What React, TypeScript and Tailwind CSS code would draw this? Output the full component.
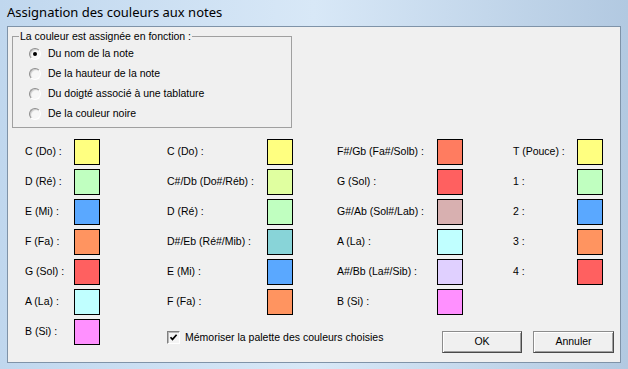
const col1 = [
  { label: "C (Do) :", color: "#ffff80" },
  { label: "D (Ré) :", color: "#c0ffc0" },
  { label: "E (Mi) :", color: "#5aa8ff" },
  { label: "F (Fa) :", color: "#ff9460" },
  { label: "G (Sol) :", color: "#ff6060" },
  { label: "A (La) :", color: "#c0ffff" },
  { label: "B (Si) :", color: "#ff90ff" },
];

const col2 = [
  { label: "C (Do) :", color: "#ffff80" },
  { label: "C#/Db (Do#/Réb) :", color: "#e0ffa0" },
  { label: "D (Ré) :", color: "#c0ffc0" },
  { label: "D#/Eb (Ré#/Mib) :", color: "#88d4d8" },
  { label: "E (Mi) :", color: "#5aa8ff" },
  { label: "F (Fa) :", color: "#ff9460" },
];

const col3 = [
  { label: "F#/Gb (Fa#/Solb) :", color: "#ff7c60" },
  { label: "G (Sol) :", color: "#ff6060" },
  { label: "G#/Ab (Sol#/Lab) :", color: "#d8b0b0" },
  { label: "A (La) :", color: "#c0ffff" },
  { label: "A#/Bb (La#/Sib) :", color: "#e0d0ff" },
  { label: "B (Si) :", color: "#ff90ff" },
];

const col4 = [
  { label: "T (Pouce) :", color: "#ffff80" },
  { label: "1 :", color: "#c0ffc0" },
  { label: "2 :", color: "#5aa8ff" },
  { label: "3 :", color: "#ff9460" },
  { label: "4 :", color: "#ff6060" },
];

const options = [
  "Du nom de la note",
  "De la hauteur de la note",
  "Du doigté associé à une tablature",
  "De la couleur noire",
];

type Note = { label: string; color: string };

function Column({ items, width, labelWidth }: { items: Note[]; width: string; labelWidth: string }) {
  return (
    <div className={`flex flex-col gap-[4px] ${width}`}>
      {items.map((it, i) => (
        <div key={i} className="flex items-center h-[26px]">
          <span className={`${labelWidth} shrink-0 whitespace-nowrap`}>{it.label}</span>
          <div
            className="w-[26px] h-[26px] border border-black"
            style={{ backgroundColor: it.color }}
          />
        </div>
      ))}
    </div>
  );
}

function Radio({ checked }: { checked?: boolean }) {
  return (
    <div className="w-[12px] h-[12px] rounded-full border border-t-[#8d8d8d] border-l-[#8d8d8d] border-b-white border-r-white bg-[#f7f7f7] shadow-[inset_1px_1px_1px_#c8c8c8] flex items-center justify-center">
      {checked && <div className="w-[4px] h-[4px] rounded-full bg-black" />}
    </div>
  );
}

function WinButton({ children, width }: { children: string; width: string }) {
  return (
    <button
      className={`${width} h-[22px] bg-[#f0f0f0] border border-[#8c8c8c] border-b-[#4a4a4a] border-r-[#4a4a4a] shadow-[inset_1px_1px_0_#ffffff,inset_-1px_-1px_0_#a0a0a0] flex items-center justify-center`}
    >
      {children}
    </button>
  );
}

export default function App() {
  return (
    <div className="w-[628px] h-[369px] flex flex-col overflow-hidden bg-gradient-to-r from-[#c0d7ee] via-[#d8e8f7] to-[#b2c9e1] font-['Liberation_Sans',Arial,sans-serif] text-[10.5px] text-black">
      {/* barre de titre */}
      <div className="h-[26px] shrink-0 flex items-center pl-[7px] font-['Noto_Sans',sans-serif] text-[13px] text-black">
        Assignation des couleurs aux notes
      </div>

      {/* zone client */}
      <div className="flex-1 mx-[7px] mb-[6px] border border-[#7f93a8] bg-[#f0f0f0] flex flex-col">
        <fieldset className="ml-[4px] mt-[3px] w-[280px] border border-[#a0a0a0] pb-[3px]">
          <legend className="ml-[6px] px-[1px] leading-[13px]">La couleur est assignée en fonction :</legend>
          <div className="pl-[16px] pt-[1px]">
            {options.map((o, i) => (
              <div key={i} className="h-[20px] flex items-center gap-[7px]">
                <Radio checked={i === 0} />
                <span>{o}</span>
              </div>
            ))}
          </div>
        </fieldset>

        <div className="flex mt-[11px] pl-[17px]">
          <Column items={col1} width="w-[142px]" labelWidth="w-[49px]" />

          <div className="flex-1 flex flex-col pr-[6px]">
            <div className="flex">
              <Column items={col2} width="w-[170px]" labelWidth="w-[100px]" />
              <Column items={col3} width="w-[176px]" labelWidth="w-[100px]" />
              <Column items={col4} width="w-[100px]" labelWidth="w-[64px]" />
            </div>

            <div className="flex items-start mt-[16px]">
              <div className="flex items-center gap-[5px] h-[13px]">
                <div className="w-[13px] h-[13px] border border-t-[#808080] border-l-[#808080] border-b-white border-r-white bg-[#f4f4f4] shadow-[inset_1px_1px_0_#b8b8b8] flex items-center justify-center">
                  <svg width="9" height="9" viewBox="0 0 9 9">
                    <polyline points="1.5,4.2 3.5,6.4 7.6,1.8" fill="none" stroke="#000" strokeWidth="1.7" />
                  </svg>
                </div>
                <span>Mémoriser la palette des couleurs choisies</span>
              </div>

              <div className="ml-auto flex gap-[11px]">
                <WinButton width="w-[80px]">OK</WinButton>
                <WinButton width="w-[81px]">Annuler</WinButton>
              </div>
            </div>
          </div>
        </div>
      </div>
    </div>
  );
}
